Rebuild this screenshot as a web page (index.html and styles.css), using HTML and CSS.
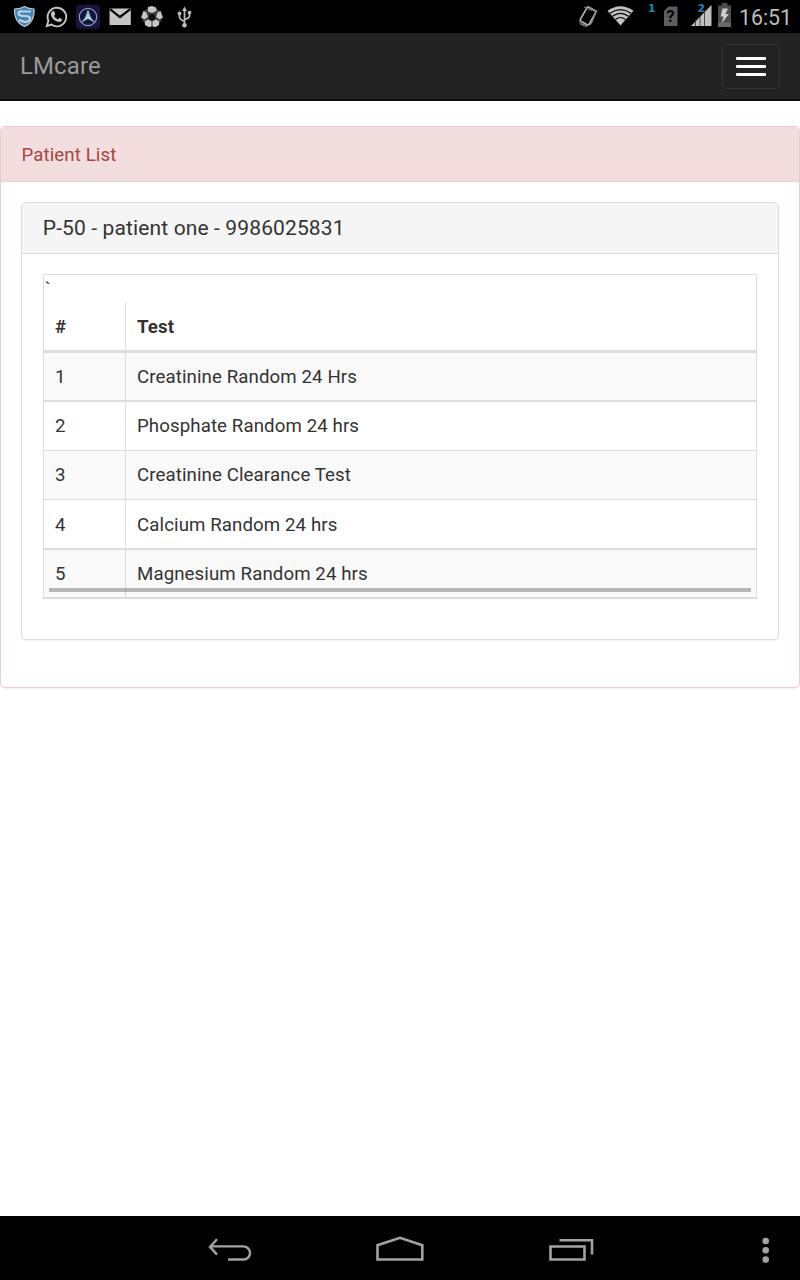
FILE: index.html
```html
<!DOCTYPE html>
<html lang="en">
<head>
<meta charset="utf-8">
<title>LMcare</title>
<link rel="stylesheet" href="styles.css">
</head>
<body>
<div class="screen">
  <header class="status">
    <div class="status-left">
      <svg viewBox="0 0 32 32"><path d="M6.500 9Q12.500 9 16.500 6.500Q20.500 9 26 9Q27 22 16.500 26.500Q6 22 6.500 9Z" fill="#3d86bd" stroke="#bdc5ca" stroke-width="1.200"/><path d="M23 11.500H14Q10 11 10.500 14Q11.500 16 16.500 16Q23 16 22 19Q21 22 16.500 22L11 20" fill="none" stroke="#c6d3dc" stroke-width="2.200"/></svg>
      <svg viewBox="0 0 32 32"><path d="M6.800 26L8.400 20.800A9.300 9.300 0 1 1 11.500 24.600Z" fill="none" stroke="#c4c4c4" stroke-width="1.900"/><path d="M12 11.500L14 11L15.400 14.300L14 16Q15.500 18.600 18 19.400L19.500 17.800L22 19.300Q22 22 19 22Q13 21 11 15.500Q10.500 13 12 11.500Z" fill="#c4c4c4"/></svg>
      <svg viewBox="0 0 32 32"><rect x="4" y="5" width="24" height="24" rx="4" fill="#16153f"/><circle cx="16" cy="17" r="8.700" fill="#10153e" stroke="#8d98b8" stroke-width="1.200"/><path d="M10 22Q14.500 18 16 10.500Q17.500 18 22 22Q18.500 19.500 16 18.500Q13.500 19.500 10 22Z" fill="#acd0d6" stroke="#acd0d6" stroke-width=".8"/></svg>
      <svg viewBox="0 0 32 32"><path d="M5.500 8.500H26.800V25H5.500Z" fill="#c5c5c5"/><path d="M6 9.200L16 17L26.300 9.200" fill="none" stroke="#050505" stroke-width="2.200"/></svg>
      <svg viewBox="0 0 32 32"><circle cx="16" cy="17" r="10" fill="#3d3d3d"/><g fill="#c6c6c6"><path d="M12 7L16 6L20 7.500L20.500 11L16 13L12 11.500Z"/><path d="M7.500 11L10.500 12.500L12 17L8.500 19.500L5 17.500Z"/><path d="M24.500 11L21.500 12.500L20 17L23.500 19.500L27 17.500Z"/><path d="M9 21L12.500 19.500L15.500 21.500L15.500 26L13 27.300L9 25Z"/><path d="M23 21L19.500 19.500L16.500 21.500L16.500 26L19 27.300L23 25Z"/></g><path d="M16 13.500L19.500 16L18.300 20H13.700L12.500 16Z" fill="#111"/></svg>
      <svg viewBox="0 0 32 32"><g fill="none" stroke="#bdbdbd" stroke-width="1.700"><path d="M16.500 9V25M11.500 14V17Q11.500 19 16.500 21.500M21.500 13V16Q21.500 18 16.500 19.500"/></g><g fill="#bdbdbd"><path d="M16.500 6.500L19 11H14Z"/><circle cx="16.500" cy="25.200" r="2.300"/><circle cx="11.500" cy="13.500" r="1.900"/><path d="M19.900 11H23.100V14.200H19.900Z"/></g></svg>
    </div>
    <div class="status-right">
      <svg class="right-icons" viewBox="0 0 160 33">
        <g fill="none" stroke="#b0b0b0"><rect x="-5" y="-8" width="10" height="16" rx="1.500" transform="translate(18 16) rotate(30)" stroke-width="1.700"/><path d="M17 6L24 9.500M14 7L22 10.500M10 20L10 24L17 27M27 10L22 22L20 25M25.500 13L21 24M11 23.500L18 26" stroke-width="1" stroke="#858585"/></g>
        <path d="M50.500 25.500L37.500 10.800Q50.500 1.500 63.500 10.800Z" fill="#c2c2c2"/><g fill="none" stroke="#000" stroke-width="1.100"><path d="M40 13.200Q50.500 6 61 13.200M42.500 16.200Q50.500 10.500 58.500 16.200M45.500 19.500Q50.500 15.500 55.500 19.500"/></g>
        <text x="78" y="12" class="sim">1</text>
        <path d="M98.500 6.500H107.500V26H94V11Z" fill="#5d5d5d"/><text x="96.200" y="22.300" class="query">?</text>
        <path d="M121 26L141.500 5V26Z" fill="#c0c0c0"/><path d="M125.500 19V26M130 15V26M134.500 11V26" stroke="#303030" stroke-width=".8"/>
        <text x="127.500" y="12" class="sim">2</text>
        <path d="M148 5.500H151.500V3H157.500V5.500H161V27H148Z" fill="#4d4d4d"/><path d="M148 22.500H161V27H148Z" fill="#686868"/><path d="M152.500 8.500H158L155.500 14H159L151.500 23.500L153.500 16.500H150.500Z" fill="#cdcdcd"/>
      </svg>
      <span class="clock">16:51</span>
    </div>
  </header>
  <nav class="navbar">
    <span class="brand">LMcare</span>
    <button class="toggle" aria-label="Menu"><i></i><i></i><i></i></button>
  </nav>
  <main class="content">
    <section class="panel panel-danger">
      <h1 class="panel-heading">Patient List</h1>
      <div class="panel-body">
        <section class="panel panel-default">
          <h2 class="patient-heading">P-50 - patient one - 9986025831</h2>
          <div class="patient-body">
            <div class="table-wrap">
              <div class="stray">`</div>
              <div class="row head"><b>#</b><b>Test</b></div>
              <div class="row odd thick"><span>1</span><span>Creatinine Random 24 Hrs</span></div>
              <div class="row"><span>2</span><span>Phosphate Random 24 hrs</span></div>
              <div class="row odd"><span>3</span><span>Creatinine Clearance Test</span></div>
              <div class="row thick tall"><span>4</span><span>Calcium Random 24 hrs</span></div>
              <div class="row odd thick"><span>5</span><span>Magnesium Random 24 hrs</span></div>
              <div class="scrollbar"></div>
            </div>
          </div>
        </section>
      </div>
    </section>
  </main>
  <footer class="sysnav">
    <svg viewBox="0 0 800 64" fill="none" stroke="#a3a3a3">
      <path d="M217 23.200L210 30.900L217 38.600M210.500 30.400H243.500A6.300 6.300 0 0 1 243.500 43.500H228" stroke-width="2.400"/>
      <path d="M377.500 43.500V29.200L400 21.800L422.300 29.200V43.500Z" stroke-width="2.600"/>
      <path d="M550.500 30.500H584.500V43.500H550.500ZM559.500 24.200H592V38.500" stroke-width="2.600"/>
      <g fill="#a3a3a3" stroke="none"><circle cx="765.700" cy="25" r="3.300"/><circle cx="765.700" cy="34.300" r="3.300"/><circle cx="765.700" cy="43.600" r="3.300"/></g>
    </svg>
  </footer>
</div>
</body>
</html>
```
FILE: styles.css
```css
* { box-sizing: border-box; }
body { margin: 0; background: #fff; color: #333; font: 18.67px/27px Roboto, sans-serif; letter-spacing: .1px; }
.screen { display: flex; flex-direction: column; height: 1280px; overflow: hidden; }
.status { display: flex; justify-content: space-between; height: 33px; background: #000; flex: none; }
.status-left { display: flex; padding-left: 8px; }
.status-left svg { width: 32px; height: 32px; }
.status-right { display: flex; width: 230px; }
.right-icons { width: 160px; height: 33px; overflow: visible; flex: none; }
.sim { font: bold 11px "DejaVu Sans", sans-serif; fill: #1787b8; letter-spacing: 0; }
.query { font: bold 17px Roboto, sans-serif; fill: #050505; }
.clock { padding-left: 9px; font-size: 21.3px; line-height: 35px; color: #bdbdbd; letter-spacing: 0; white-space: nowrap; }
.navbar { display: flex; align-items: center; justify-content: space-between; height: 68px; padding: 2px 20px 2px; background: #222; border-bottom: 2px solid #0c0c0c; flex: none; }
.brand { color: #999; font-size: 24px; letter-spacing: .1px; }
.toggle { display: flex; flex-direction: column; gap: 5.400px; width: 58px; height: 45px; padding: 12.500px 14px; border: 1px solid #333; border-radius: 5px; background: transparent; }
.toggle i { width: 30px; height: 2.600px; background: #fff; border-radius: 1px; flex: none; margin-left: -1px; }
.content { flex: 1; padding-top: 25px; }
.panel { border: 1px solid #ddd; border-radius: 5px; background: #fff; box-shadow: 0 1px 2px rgba(0, 0, 0, .07); }
.panel-danger { height: 562px; border-color: #ebccd1; }
.panel-heading { margin: 0; height: 55px; padding: 15px 20.500px; border-bottom: 1px solid #ebccd1; border-radius: 4px 4px 0 0; background: #f2dede; color: #a94442; font-size: 18.67px; font-weight: 400; line-height: 27px; }
.panel-body { padding: 20px; }
.panel-default { width: 758px; height: 438px; }
.patient-heading { margin: 0; height: 51px; padding: 13px 20.800px; border-bottom: 1px solid #ddd; border-radius: 4px 4px 0 0; background: #f5f5f5; font-size: 21px; font-weight: 400; line-height: 25px; letter-spacing: .13px; }
.patient-body { padding: 20px 21px; }
.table-wrap { position: relative; width: 714px; height: 325px; border: 1px solid #ddd; border-bottom: 0; }
.stray { height: 27px; padding-left: 1px; line-height: 29px; }
.row { display: grid; grid-template-columns: 82px 1fr; height: 49px; border-bottom: 1px solid #ddd; }
.row > * { display: flex; align-items: center; padding: 1px 0 0 11px; }
.row > :first-child { border-right: 1px solid #ddd; }
.row.thick { border-bottom-width: 2px; padding-top: 0; }
.row.thick > * { padding-top: 2px; }
.row.head { height: 51px; border-bottom-width: 3px; }
.row.head > * { padding-top: 2px; }
.row.tall { height: 50px; }
.odd { background: #f9f9f9; }
.scrollbar { position: absolute; left: 5px; right: 5px; bottom: 7px; height: 4px; background: rgba(110, 110, 110, .48); }
.sysnav { height: 64px; background: #000; flex: none; }
.sysnav svg { display: block; width: 800px; height: 64px; }
```
